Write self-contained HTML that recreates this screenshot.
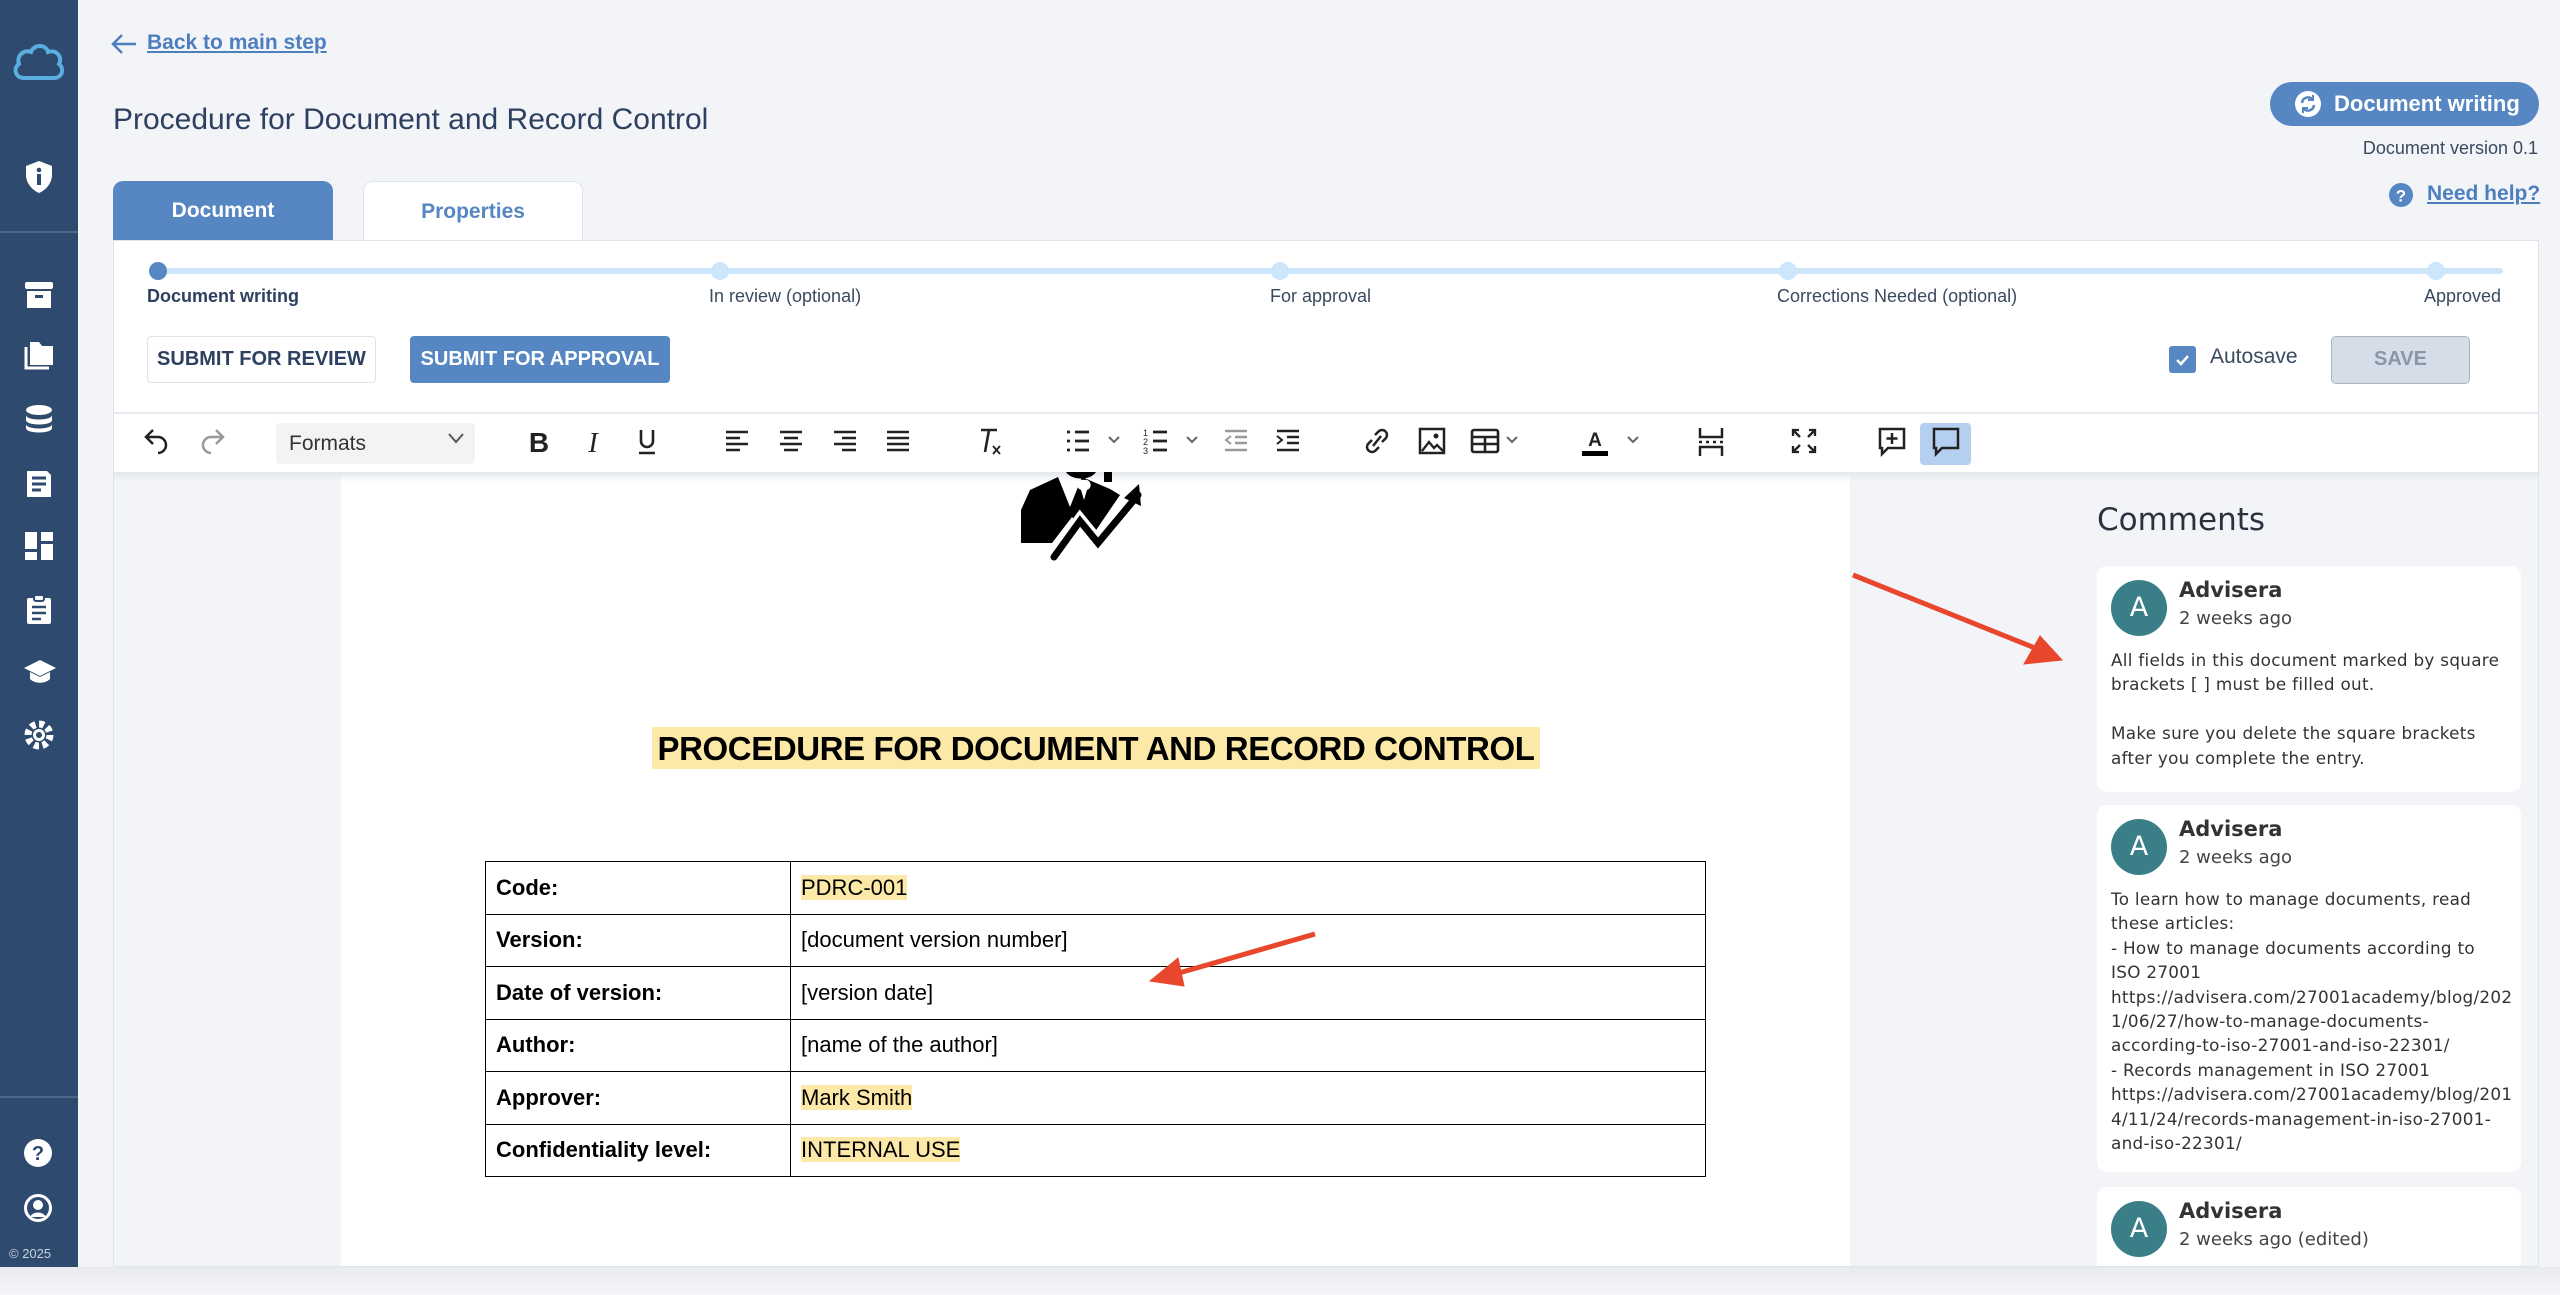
<!DOCTYPE html>
<html><head><meta charset="utf-8"><style>
*{box-sizing:border-box;margin:0;padding:0}
body{width:2560px;height:1295px;overflow:hidden;background:#f2f4f8;font-family:"Liberation Sans",sans-serif;position:relative;color:#2d4060}
.a{position:absolute}
.sb{left:0;top:0;width:78px;height:1295px;background:#2e4a6e}
.sb svg{position:absolute;left:23px}
.tb svg{position:absolute;top:426px}
.lbl{font-size:18px;color:#3a4a60;top:286px}
.dot{width:18px;height:18px;border-radius:50%;background:#cde6fb;top:262px}
.cm{left:2097px;width:424px;background:#fff;border-radius:10px;font-family:"DejaVu Sans",sans-serif;color:#333;padding:14px 14px 0 14px}
.cm .av{position:absolute;left:14px;top:14px;width:56px;height:56px;border-radius:50%;background:#3a7f87;color:#fff;font-size:27px;text-align:center;line-height:56px}
.cm .nm{position:absolute;left:82px;top:12px;font-weight:bold;font-size:21px}
.cm .tm{position:absolute;left:82px;top:42px;font-size:18px;color:#444}
.cm .tx{position:absolute;left:14px;top:82px;font-size:16.8px;line-height:24.4px;white-space:pre;letter-spacing:.3px}
td{border:1.5px solid #000;height:52.5px;font-size:22px;padding:0 10px;font-family:"Liberation Sans",sans-serif;color:#000}
td.k{font-weight:bold;width:305px}
.hl{background:#fce9a8}
</style></head><body>
<div class="a sb">
<svg style="top:40px;left:10px" width="58" height="44" viewBox="0 0 58 44"><path d="M14 38C5 38 3 28 9 24 6 16 14 9 21 12 24 4 36 4 38 12 46 9 53 17 49 24 55 29 52 38 44 38Z" fill="none" stroke="#5aaee0" stroke-width="4"/></svg>
<svg style="top:160px" width="32" height="34" viewBox="0 0 32 34"><path d="M16 1 3 6v9c0 8 6 15 13 18 7-3 13-10 13-18V6Z" fill="#fff"/><rect x="14" y="14" width="4" height="11" fill="#2e4a6e"/><circle cx="16" cy="10" r="2.3" fill="#2e4a6e"/></svg>
<div class="a" style="left:0;top:231px;width:78px;height:2px;background:#4d6789"></div>
<svg style="top:280px" width="32" height="30" viewBox="0 0 32 30"><rect x="2" y="2" width="28" height="7" rx="2" fill="#fff"/><path d="M4 11h24v17H4Z" fill="#fff"/><rect x="12" y="15" width="8" height="3" fill="#2e4a6e"/></svg>
<svg style="top:340px" width="32" height="30" viewBox="0 0 32 30"><path d="M7 2h9l3 4h11v19H7Z" fill="#fff"/><path d="M3 7v21h23" fill="none" stroke="#fff" stroke-width="3"/></svg>
<svg style="top:403px" width="32" height="32" viewBox="0 0 32 32"><ellipse cx="16" cy="7" rx="13" ry="5" fill="#fff"/><path d="M3 12c0 6 26 6 26 0v5c0 6-26 6-26 0Z M3 21c0 6 26 6 26 0v4c0 6-26 6-26 0Z" fill="#fff"/></svg>
<svg style="top:468px" width="32" height="32" viewBox="0 0 32 32"><path d="M4 3h20l4 4v22H4Z" fill="#fff"/><path d="M9 10h14M9 16h14M9 22h9" stroke="#2e4a6e" stroke-width="3"/></svg>
<svg style="top:530px" width="32" height="32" viewBox="0 0 32 32"><rect x="2" y="2" width="12" height="17" fill="#fff"/><rect x="18" y="2" width="12" height="9" fill="#fff"/><rect x="2" y="22" width="12" height="8" fill="#fff"/><rect x="18" y="14" width="12" height="16" fill="#fff"/></svg>
<svg style="top:593px" width="32" height="32" viewBox="0 0 32 32"><rect x="4" y="5" width="24" height="26" rx="2" fill="#fff"/><rect x="11" y="2" width="10" height="6" rx="2" fill="#fff" stroke="#2e4a6e" stroke-width="2"/><path d="M9 14h14M9 20h14M9 26h9" stroke="#2e4a6e" stroke-width="2.5"/></svg>
<svg style="top:658px" width="34" height="28" viewBox="0 0 34 28"><path d="M17 2 1 10l16 8 16-8Z M7 14v7c5 5 15 5 20 0v-7l-10 5Z" fill="#fff"/></svg>
<svg style="top:719px" width="32" height="32" viewBox="0 0 32 32"><circle cx="16" cy="16" r="11" fill="none" stroke="#fff" stroke-width="7" stroke-dasharray="5 3.6"/><circle cx="16" cy="16" r="6" fill="#fff"/><circle cx="16" cy="16" r="3" fill="#2e4a6e"/></svg>
<div class="a" style="left:0;top:1096px;width:78px;height:2px;background:#4d6789"></div>
<svg style="top:1138px" width="30" height="30" viewBox="0 0 30 30"><circle cx="15" cy="15" r="14" fill="#fff"/><text x="15" y="22" text-anchor="middle" font-size="20" font-weight="bold" fill="#2e4a6e" font-family="Liberation Sans">?</text></svg>
<svg style="top:1193px" width="30" height="30" viewBox="0 0 30 30"><circle cx="15" cy="15" r="12.5" fill="none" stroke="#fff" stroke-width="3"/><circle cx="15" cy="12" r="5" fill="#fff"/><path d="M7 24c3-6 13-6 16 0" fill="#fff"/></svg>
<div class="a" style="left:9px;top:1246px;font-size:13px;color:#c8d2e0">© 2025</div>
</div>

<svg class="a" style="left:110px;top:32px" width="28" height="24" viewBox="0 0 28 24"><path d="M26 12H3M12 3 3 12l9 9" fill="none" stroke="#4d7fbf" stroke-width="2.5"/></svg>
<div class="a" style="left:147px;top:31px;font-size:21px;color:#4d7fbf;text-decoration:underline;font-weight:bold">Back to main step</div>
<div class="a" style="left:113px;top:103px;font-size:30px;color:#2d4060;white-space:nowrap">Procedure for Document and Record Control</div>

<div class="a" style="left:2270px;top:82px;width:269px;height:44px;border-radius:22px;background:#5787c2;color:#fff;font-weight:bold;font-size:22px;line-height:44px;padding-left:64px">Document writing</div>
<svg class="a" style="left:2294px;top:90px" width="28" height="28" viewBox="0 0 28 28"><circle cx="14" cy="14" r="13" fill="#fff"/><path d="M8 13a6 6 0 0 1 10-4M20 15a6 6 0 0 1-10 4" fill="none" stroke="#5787c2" stroke-width="2.5"/><path d="M19 5v5h-5M9 23v-5h5" fill="none" stroke="#5787c2" stroke-width="2"/></svg>
<div class="a" style="right:22px;top:138px;font-size:18px;color:#3a4a60">Document version 0.1</div>
<svg class="a" style="left:2388px;top:182px" width="26" height="26" viewBox="0 0 26 26"><circle cx="13" cy="13" r="12" fill="#5787c2"/><text x="13" y="19.5" text-anchor="middle" font-size="17" font-weight="bold" fill="#fff" font-family="Liberation Sans">?</text></svg>
<div class="a" style="left:2427px;top:182px;font-size:21px;font-weight:bold;color:#4d7fbf;text-decoration:underline">Need help?</div>

<div class="a" style="left:113px;top:181px;width:220px;height:60px;background:#5787c2;border-radius:10px 10px 0 0;color:#fff;font-weight:bold;font-size:21px;text-align:center;line-height:60px">Document</div>
<div class="a" style="left:363px;top:181px;width:220px;height:60px;background:#fff;border:1px solid #dde3ea;border-bottom:none;border-radius:10px 10px 0 0;color:#5787c2;font-weight:bold;font-size:21px;text-align:center;line-height:60px">Properties</div>

<div class="a" style="left:113px;top:240px;width:2426px;height:1027px;background:#fff;border:1px solid #dde3ea"></div>
<div class="a" style="left:160px;top:268px;width:2343px;height:6px;border-radius:3px;background:#cde6fb"></div>
<div class="a dot" style="left:149px;background:#5787c2"></div>
<div class="a dot" style="left:711px"></div><div class="a dot" style="left:1271px"></div><div class="a dot" style="left:1779px"></div><div class="a dot" style="left:2427px"></div>
<div class="a lbl" style="left:147px;font-weight:bold;color:#2d4060">Document writing</div>
<div class="a lbl" style="left:709px">In review (optional)</div>
<div class="a lbl" style="left:1270px">For approval</div>
<div class="a lbl" style="left:1777px">Corrections Needed (optional)</div>
<div class="a lbl" style="left:2424px">Approved</div>

<div class="a" style="left:147px;top:336px;width:229px;height:47px;border:1px solid #dde3ea;border-radius:4px;font-weight:bold;font-size:20px;text-align:center;line-height:45px;color:#2d4060">SUBMIT FOR REVIEW</div>
<div class="a" style="left:410px;top:336px;width:260px;height:47px;background:#5787c2;border-radius:4px;font-weight:bold;font-size:20px;text-align:center;line-height:47px;color:#fff">SUBMIT FOR APPROVAL</div>
<div class="a" style="left:2169px;top:346px;width:27px;height:27px;background:#5787c2;border-radius:3px"></div>
<svg class="a" style="left:2174px;top:351px" width="17" height="17" viewBox="0 0 17 17"><path d="M3 9l4 4 7-8" fill="none" stroke="#fff" stroke-width="2.5"/></svg>
<div class="a" style="left:2210px;top:345px;font-size:21px;color:#3a4a60">Autosave</div>
<div class="a" style="left:2331px;top:336px;width:139px;height:48px;background:#d5dde8;border:1.5px solid #aab5c4;border-radius:5px;font-weight:bold;font-size:20px;text-align:center;line-height:45px;color:#8a96a6">SAVE</div>

<div class="a" style="left:114px;top:412px;width:2424px;height:2px;background:#e6eaf0"></div>
<div class="a" style="left:276px;top:423px;width:199px;height:41px;background:#f2f3f5;border-radius:4px;font-size:21px;color:#333;line-height:41px;padding-left:13px">Formats</div>
<div class="a" style="left:1920px;top:423px;width:51px;height:42px;background:#b4cff0;border-radius:4px"></div>
<div class="tb" style="position:absolute;left:0;top:0">
<svg style="left:143px" width="28" height="30" viewBox="0 0 28 30"><path d="M10 4 3 11l7 7M3 11h12a8 8 0 0 1 0 16" fill="none" stroke="#222" stroke-width="2.5"/></svg>
<svg style="left:198px" width="28" height="30" viewBox="0 0 28 30"><path d="M18 4l7 7-7 7M25 11H13a8 8 0 0 0 0 16" fill="none" stroke="#999" stroke-width="2.5"/></svg>
<svg style="left:446px" width="20" height="30" viewBox="0 0 20 30"><path d="M3 8l7 8 7-8" fill="none" stroke="#555" stroke-width="2"/></svg>
<svg style="left:527px" width="24" height="30" viewBox="0 0 24 30"><text x="12" y="26" text-anchor="middle" font-size="28" font-weight="bold" font-family="Liberation Sans" fill="#222">B</text></svg>
<svg style="left:581px" width="24" height="30" viewBox="0 0 24 30"><text x="12" y="26" text-anchor="middle" font-size="28" font-style="italic" font-family="Liberation Serif" fill="#222">I</text></svg>
<svg style="left:635px" width="24" height="34" viewBox="0 0 24 34"><path d="M6 4v11a6 6 0 0 0 12 0V4M4 27h16" fill="none" stroke="#222" stroke-width="2.6"/></svg>
<svg style="left:724px" width="26" height="30" viewBox="0 0 26 30"><path d="M2 6h22M2 12h14M2 18h22M2 24h14" stroke="#222" stroke-width="2.6"/></svg>
<svg style="left:778px" width="26" height="30" viewBox="0 0 26 30"><path d="M2 6h22M6 12h14M2 18h22M6 24h14" stroke="#222" stroke-width="2.6"/></svg>
<svg style="left:832px" width="26" height="30" viewBox="0 0 26 30"><path d="M2 6h22M10 12h14M2 18h22M10 24h14" stroke="#222" stroke-width="2.6"/></svg>
<svg style="left:885px" width="26" height="30" viewBox="0 0 26 30"><path d="M2 6h22M2 12h22M2 18h22M2 24h22" stroke="#222" stroke-width="2.6"/></svg>
<svg style="left:976px" width="28" height="32" viewBox="0 0 28 32"><path d="M5 4h16M13 4l-4 22" stroke="#222" stroke-width="2.6"/><path d="M17 20l7 8M24 20l-7 8" stroke="#222" stroke-width="1.8"/></svg>
<svg style="left:1065px" width="64" height="30" viewBox="0 0 64 30"><path d="M2 6h3M2 15h3M2 24h3M10 6h14M10 15h14M10 24h14" stroke="#222" stroke-width="2.8"/><path d="M44 11l5 5 5-5" fill="none" stroke="#666" stroke-width="2"/></svg>
<svg style="left:1143px" width="64" height="32" viewBox="0 0 64 32"><text x="0" y="10" font-size="9" font-family="Liberation Sans" fill="#222">1</text><text x="0" y="19" font-size="9" font-family="Liberation Sans" fill="#222">2</text><text x="0" y="28" font-size="9" font-family="Liberation Sans" fill="#222">3</text><path d="M10 6h14M10 15h14M10 24h14" stroke="#222" stroke-width="2.8"/><path d="M44 11l5 5 5-5" fill="none" stroke="#666" stroke-width="2"/></svg>
<svg style="left:1223px" width="26" height="30" viewBox="0 0 26 30"><path d="M2 5h22M12 11h12M12 17h12M2 24h22" stroke="#999" stroke-width="2.6"/><path d="M8 10l-5 4 5 4" fill="none" stroke="#999" stroke-width="2"/></svg>
<svg style="left:1275px" width="26" height="30" viewBox="0 0 26 30"><path d="M2 5h22M12 11h12M12 17h12M2 24h22" stroke="#222" stroke-width="2.6"/><path d="M2 10l5 4-5 4" fill="none" stroke="#222" stroke-width="2"/></svg>
<svg style="left:1363px" width="28" height="30" viewBox="0 0 28 30"><path d="M12 9l4-4a5 5 0 0 1 7 7l-4 4M16 21l-4 4a5 5 0 0 1-7-7l4-4M10 20l8-10" fill="none" stroke="#222" stroke-width="2.5"/></svg>
<svg style="left:1418px" width="28" height="30" viewBox="0 0 28 30"><rect x="2" y="3" width="24" height="24" fill="none" stroke="#222" stroke-width="2.5"/><path d="M4 25l7-9 5 6 3-3 6 6" fill="none" stroke="#222" stroke-width="2.3"/><circle cx="18" cy="10" r="2.5" fill="#222"/></svg>
<svg style="left:1470px" width="62" height="30" viewBox="0 0 62 30"><rect x="2" y="4" width="26" height="22" rx="2" fill="none" stroke="#222" stroke-width="2.6"/><path d="M2 11h26M2 18h26M15 11v15" stroke="#222" stroke-width="2.6"/><path d="M37 11l5 5 5-5" fill="none" stroke="#666" stroke-width="2"/></svg>
<svg style="left:1580px" width="66" height="32" viewBox="0 0 66 32"><text x="15" y="20" text-anchor="middle" font-size="19" font-weight="bold" font-family="Liberation Sans" fill="#222">A</text><rect x="2" y="25" width="26" height="5" fill="#000"/><path d="M48 11l5 5 5-5" fill="none" stroke="#666" stroke-width="2"/></svg>
<svg style="left:1697px" width="28" height="32" viewBox="0 0 28 32"><path d="M3 2v9h22V2M3 30v-9h22v9M2 16h3M9 16h3M16 16h3M23 16h3" stroke="#222" stroke-width="2.5" fill="none"/></svg>
<svg style="left:1790px" width="28" height="30" viewBox="0 0 28 30"><path d="M3 10V4h6M19 4h6v6M25 20v6h-6M9 26H3v-6M3 4l7 7M25 4l-7 7M25 26l-7-7M3 26l7-7" fill="none" stroke="#222" stroke-width="2.3"/></svg>
<svg style="left:1877px" width="30" height="32" viewBox="0 0 30 32"><path d="M3 3h24v19H11l-6 6v-6H3Z" fill="none" stroke="#222" stroke-width="2.5"/><path d="M15 7v11M9.5 12.5h11" stroke="#222" stroke-width="2.5"/></svg>
<svg style="left:1931px" width="30" height="32" viewBox="0 0 30 32"><path d="M3 3h24v19H11l-6 6v-6H3Z" fill="none" stroke="#222" stroke-width="2.5"/></svg>
</div>

<div class="a" style="left:114px;top:472px;width:2424px;height:794px;background:#f2f4f8"></div>
<div class="a" style="left:341px;top:472px;width:1509px;height:794px;background:#fff"></div>
<div class="a" style="left:114px;top:472px;width:2424px;height:10px;background:linear-gradient(#e4e7ec,rgba(242,244,248,0))"></div>
<svg class="a" style="left:1018px;top:472px" width="160" height="90" viewBox="0 0 160 90"><path d="M12 18 40 5l12 30 12-30 28 12 10 6-30 44-18-22L34 71H3V38Z" fill="#000"/><path d="M48 0a16 10 0 0 0 30 0Z" fill="#000"/><path d="M66 8a5 5 0 0 1 3 10l-3 10-3-10a5 5 0 0 1 3-10Z" fill="#fff"/><path d="M36 85l26-36 18 22 40-48" fill="none" stroke="#fff" stroke-width="14"/><path d="M36 85l26-36 18 22 40-48" fill="none" stroke="#000" stroke-width="7" stroke-linecap="round"/><path d="M106 26l15-14 2 22Z" fill="#000"/><path d="M86 0h8v10h-8Z" fill="#000"/></svg>
<div class="a hl" style="left:652px;top:727px;width:888px;height:42px"></div>
<div class="a" style="left:552px;top:727px;width:1088px;height:42px;font-size:33px;font-weight:bold;color:#000;line-height:44px;text-align:center;white-space:nowrap;letter-spacing:-.4px">PROCEDURE FOR DOCUMENT AND RECORD CONTROL</div>
<table class="a" style="left:485px;top:861px;width:1221px;border-collapse:collapse">
<tr><td class="k">Code:</td><td><span class="hl">PDRC-001</span></td></tr>
<tr><td class="k">Version:</td><td>[document version number]</td></tr>
<tr><td class="k">Date of version:</td><td>[version date]</td></tr>
<tr><td class="k">Author:</td><td>[name of the author]</td></tr>
<tr><td class="k">Approver:</td><td><span class="hl">Mark Smith</span></td></tr>
<tr><td class="k">Confidentiality level:</td><td><span class="hl">INTERNAL USE</span></td></tr>
</table>

<div class="a" style="left:2097px;top:502px;font-size:31px;font-family:'DejaVu Sans',sans-serif;color:#2a3240">Comments</div>
<div class="a cm" style="top:566px;height:226px"><div class="av">A</div><div class="nm">Advisera</div><div class="tm">2 weeks ago</div><div class="tx">All fields in this document marked by square
brackets [ ] must be filled out.

Make sure you delete the square brackets
after you complete the entry.</div></div>
<div class="a cm" style="top:805px;height:367px"><div class="av">A</div><div class="nm">Advisera</div><div class="tm">2 weeks ago</div><div class="tx">To learn how to manage documents, read
these articles:
- How to manage documents according to
ISO 27001
https://advisera.com/27001academy/blog/202
1/06/27/how-to-manage-documents-
according-to-iso-27001-and-iso-22301/
- Records management in ISO 27001
https://advisera.com/27001academy/blog/201
4/11/24/records-management-in-iso-27001-
and-iso-22301/</div></div>
<div class="a cm" style="top:1187px;height:79px;border-radius:10px 10px 0 0"><div class="av">A</div><div class="nm">Advisera</div><div class="tm">2 weeks ago (edited)</div></div>
<div class="a" style="left:0;top:1267px;width:2560px;height:28px;background:linear-gradient(#e8eaee,#f5f6f8)"></div>

<svg class="a" style="left:0;top:0" width="2560" height="1295"><g fill="#e9472d" stroke="#e9472d"><path d="M1853 575 2040 650" stroke-width="5"/><path d="M2062 660 2024 664 2040 636Z"/><path d="M1315 934 1172 975" stroke-width="5"/><path d="M1150 981 1178 958 1184 986Z"/></g></svg>
</body></html>
